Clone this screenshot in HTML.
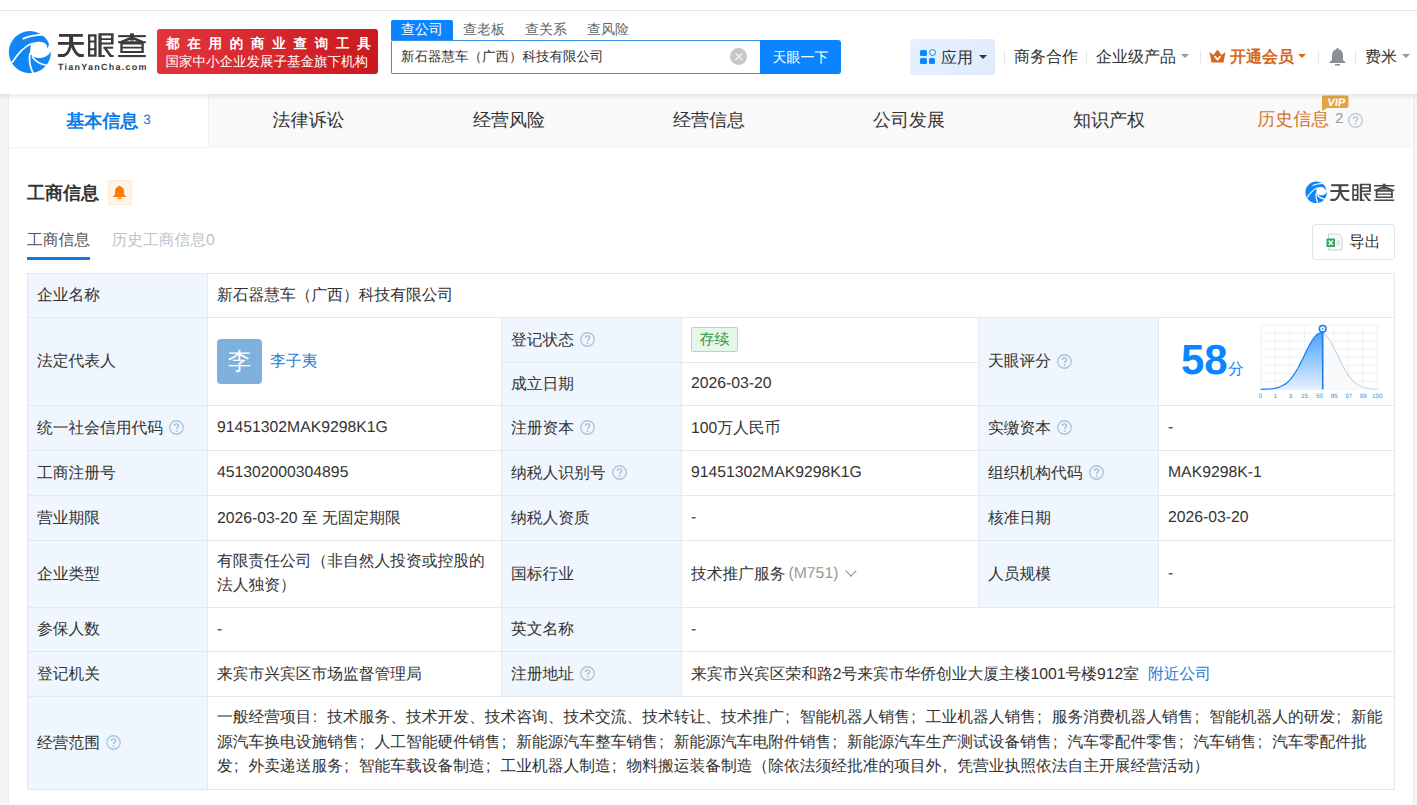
<!DOCTYPE html>
<html><head><meta charset="utf-8">
<style>
*{box-sizing:border-box;margin:0;padding:0}
html,body{width:1417px;height:805px;overflow:hidden}
body{position:relative;background:#f5f5f5;font-family:"Liberation Sans",sans-serif;color:#333;font-size:16px;text-rendering:geometricPrecision}
.a{position:absolute;white-space:nowrap}
#hdr{position:absolute;left:0;top:0;width:1417px;height:94px;background:#fff}
#hdr .topline{position:absolute;left:0;top:10px;width:1417px;height:1px;background:#e6e6e6}
#card{position:absolute;left:9px;top:94px;width:1404px;height:711px;background:#fff;box-shadow:-1px 0 0 #ebebeb,1px 0 0 #ebebeb}
.tabs{position:absolute;left:0;top:0;width:1403px;height:54px;background:#f9f9f9;border-bottom:1px solid #f3f3f3}
#shd{position:absolute;left:0;top:94px;width:1417px;height:6px;background:linear-gradient(rgba(0,0,0,0.075),rgba(0,0,0,0))}
.tab{position:absolute;top:0;height:53px;width:200px;text-align:center;line-height:52px;font-size:18px;color:#333}
.tab.d{border-left:1px solid #efefef}
.tab.on{background:#fff;color:#0a7ce8;font-weight:bold;width:199px}
.qi{margin-left:6px;margin-top:-1px;flex:none}
.q{display:inline-block;width:14px;height:14px;border:1.3px solid #b9cfe4;border-radius:50%;color:#b0c8df;font-size:11px;line-height:12px;text-align:center;vertical-align:middle;font-weight:normal}
/* table */
.tb{position:absolute}
.cell{position:absolute;font-size:16px;color:#333;display:flex;align-items:center;padding-left:10px}
.lbl{background:#eff6fd}
.hl{position:absolute;height:1px;background:#e4ebf3}
.vl{position:absolute;width:1px;background:#e4ebf3}
.c{position:absolute;border:1px solid #e3e9f0;font-size:15.75px;color:#333;display:flex;align-items:center;padding-left:9px;white-space:nowrap;background:#fff}
.c.lbl{background:#eff6fd}
.qi{margin-left:6px;margin-top:-1px;flex:none}
.q{display:inline-block;position:relative;width:14px;height:14px;border:1.2px solid #bcd2e6;border-radius:50%;color:#a9c4dc;font-size:10.5px;line-height:12px;text-align:center;font-style:normal;margin-left:6px}
.av{display:inline-block;width:45px;height:45px;border-radius:4px;background:#7eb1dc;color:#fff;font-size:23.5px;line-height:45px;text-align:center;font-weight:500}
.lk{color:#2a7bd6}
.av+.lk{margin-left:8px}
.tag{display:inline-block;border:1px solid #a6dfb5;background:#e6f7ea;color:#2b9b47;font-size:15px;padding:0 7.5px;height:25px;line-height:23px;border-radius:2px;margin-top:-1px}
.gr{color:#999;margin-left:3px}
.chev{display:inline-block;width:8px;height:8px;border-right:1.2px solid #8a8a8a;border-bottom:1.2px solid #8a8a8a;transform:rotate(45deg);margin-left:9px;margin-top:-6px}
.ml{white-space:normal;line-height:24px}
.logo-t{left:57px;top:27px;font-size:29px;font-weight:bold;color:#3b3738;letter-spacing:1.5px;line-height:38px;transform:scaleY(0.86);transform-origin:0 18px}
.logo-s{left:58px;top:61px;font-size:9px;font-weight:bold;color:#3b3738;letter-spacing:1.25px;line-height:12px}
.banner{left:157px;top:29px;width:221px;height:45px;border-radius:3px;background:linear-gradient(100deg,#e2363c,#c9191f);color:#fff;text-align:center}
.b1{position:absolute;left:9px;top:5px;font-size:13.5px;font-weight:bold;letter-spacing:7.75px;line-height:20px}
.b2{position:absolute;left:8.5px;top:23px;font-size:13.5px;font-weight:500;line-height:19px}
.stab{top:20px;width:62px;height:20px;line-height:18.5px;font-size:14px;color:#666;text-align:center;border-radius:2px 2px 0 0}
.stab.on{background:#0a84ff;color:#fff}
.sbox{left:391px;top:40px;width:370px;height:34px;border:1px solid #3d8fe0;border-right:none;border-radius:2px 0 0 2px;font-size:13.5px;line-height:32px;padding-left:9px;color:#333}
.clr{left:730px;top:48px;width:17px;height:17px;border-radius:50%;background:#c6c6ca}
.clr:before,.clr:after{content:"";position:absolute;left:3.5px;top:7.8px;width:10px;height:1.4px;background:#fff;transform:rotate(45deg)}
.clr:after{transform:rotate(-45deg)}
.sbtn{left:760px;top:40px;width:81px;height:34px;background:#0a84ff;border-radius:0 3px 3px 0;color:#fff;font-size:14px;line-height:34px;text-align:center}
.appbtn{left:910px;top:39px;width:85px;height:36px;border-radius:3px;background:linear-gradient(135deg,#e6f1ff,#dfeafc)}
.grid{position:absolute;left:10px;top:10px;width:16px;height:16px}
.grid i{position:absolute;width:6.6px;height:6.4px;background:#0a84ff;border-radius:1.5px}
.grid i:nth-child(1){left:0.3px;top:0.5px}.grid i:nth-child(2){left:8.6px;top:0.2px;width:7.2px;height:7.2px;background:none;border:1.9px solid #0a84ff;border-radius:50%}
.grid i:nth-child(3){left:0.3px;top:8.5px}.grid i:nth-child(4){left:8.6px;top:8.5px}
.apptx{position:absolute;left:31px;top:9px;font-size:16px;line-height:22px;color:#333}
.caret{display:inline-block;width:0;height:0;border-left:4px solid transparent;border-right:4px solid transparent;border-top:4.5px solid #333}
.appbtn .caret{position:absolute;left:69px;top:16px}
.caret.gy{border-top-color:#999}.caret.or{border-top-color:#d2691e}
.sep{top:50px;width:1px;height:14px;background:#e8e8e8}
.nav{top:47px;font-size:16px;line-height:22px;color:#333}
.nav.vip{color:#d2691e;font-weight:bold}
.pn{display:inline-block;width:15.75px;text-align:left;padding-left:1.3px;font-size:16px}
</style></head><body>
<div id="hdr">
  <div class="topline"></div>
  <svg class="a" style="left:8px;top:30px" width="44" height="44" viewBox="0 0 805 805">
    <circle cx="400" cy="405" r="385" fill="#1286f5"/>
    <path d="M420 252 C480 215 580 205 650 230 C710 255 728 300 712 338 C748 312 756 245 738 195 C718 150 680 115 620 78 L830 60 L830 378 L792 378 C760 462 660 516 560 513 C480 506 425 472 400 432 Z" fill="#fff"/>
    <path d="M268 162 C380 112 500 88 640 84" stroke="#fff" stroke-width="32" fill="none"/>
    <path d="M72 600 C180 432 300 300 432 248" stroke="#fff" stroke-width="32" fill="none"/>
    <path d="M402 425 C378 560 412 700 468 810" stroke="#fff" stroke-width="32" fill="none"/>
    <path d="M440 486 C505 585 600 632 712 648" stroke="#fff" stroke-width="32" fill="none"/>
  </svg>
  <svg class="a" style="left:56px;top:31px" width="94" height="28" viewBox="56 31 94 28"><g fill="#3d393a">
<rect x="59" y="34" width="23.8" height="2.8"/>
<rect x="57.9" y="42" width="25.9" height="2.8"/>
<rect x="69.1" y="35" width="4" height="9"/>
<path d="M71 44 C70 48.5 67.8 54.3 64 55.5 L57.9 55.5 M72 44.5 C73.5 49 76 54.3 79.6 55.5 L83.8 55.5" fill="none" stroke="#3d393a" stroke-width="2.9"/>
<path d="M88 34.2 H96.6 V56.7 H88 Z M90.3 36.4 V40.6 H94.2 V36.4 Z M90.3 42.6 V48.3 H94.2 V42.6 Z M90.3 50.2 V54.5 H94.2 V50.2 Z" fill-rule="evenodd"/>
<path d="M98.4 33.3 H113.6 V44.6 H101.6 V54.9 H104.8 V57.1 H98.4 Z M101.6 35.5 V38.2 H111 V35.5 Z M101.6 40.1 V42.6 H111 V40.1 Z" fill-rule="evenodd"/>
<rect x="103.4" y="46.7" width="9.8" height="2"/>
<path d="M103.6 48.2 L106.6 48.2 L111.6 55 L113.6 55 L113.6 57.1 L109.8 57.1 Z"/>
<rect x="118.1" y="35.1" width="27.7" height="2.1"/>
<rect x="130" y="33.3" width="3.9" height="7.3"/>
<path d="M131.9 37.6 L121 42.3 M131.9 37.6 L142.8 42.3" fill="none" stroke="#3d393a" stroke-width="2.6"/>
<rect x="118.1" y="41.2" width="27.7" height="2"/>
<path d="M120.3 43 H143.8 V53.1 H120.3 Z M122.6 44.4 V46.8 H141.5 V44.4 Z M122.6 48.6 V50.9 H141.5 V48.6 Z" fill-rule="evenodd"/>
<rect x="118.1" y="55" width="27.7" height="2.1"/>
</g></svg>
  <div class="a logo-s">TianYanCha.com</div>
  <div class="a banner"><div class="b1">都在用的商业查询工具</div><div class="b2">国家中小企业发展子基金旗下机构</div></div>
  <div class="a stab on" style="left:391px">查公司</div>
  <div class="a stab" style="left:453px">查老板</div>
  <div class="a stab" style="left:515px">查关系</div>
  <div class="a stab" style="left:577px">查风险</div>
  <div class="a sbox">新石器慧车（广西）科技有限公司</div>
  <div class="a clr"></div>
  <div class="a sbtn">天眼一下</div>
  <div class="a appbtn"><span class="grid"><i></i><i class="o"></i><i></i><i></i></span><span class="apptx">应用</span><span class="caret dk"></span></div>
  <div class="a sep" style="left:1004px"></div>
  <div class="a nav" style="left:1014px">商务合作</div>
  <div class="a sep" style="left:1086px"></div>
  <div class="a nav" style="left:1096px">企业级产品</div><span class="a caret gy" style="left:1181px;top:54px"></span>
  <div class="a sep" style="left:1200px"></div>
  <svg class="a" style="left:1209px;top:49px" width="17" height="14" viewBox="0 0 17 14"><path d="M0.5 3 L4.5 6 L8.5 0.5 L12.5 6 L16.5 3 L14.5 13.5 L2.5 13.5 Z" fill="#d2691e"/><path d="M5.5 7 L8.5 10.5 L11.5 7" stroke="#fff" stroke-width="1.8" fill="none"/></svg>
  <div class="a nav vip" style="left:1230px">开通会员</div><span class="a caret or" style="left:1298px;top:54px"></span>
  <div class="a sep" style="left:1318px"></div>
  <svg class="a" style="left:1329px;top:47px" width="17" height="19" viewBox="0 0 17 19"><path d="M8.5 1 C9.3 1 9.6 1.6 9.6 2.2 C12.6 2.8 14 5.2 14 8.5 L14 13 L16.5 15.3 L16.5 16 L0.5 16 L0.5 15.3 L3 13 L3 8.5 C3 5.2 4.4 2.8 7.4 2.2 C7.4 1.6 7.7 1 8.5 1 Z" fill="#8c8f94"/><rect x="6" y="17" width="5" height="1.6" fill="#8c8f94"/></svg>
  <div class="a sep" style="left:1355px"></div>
  <div class="a nav" style="left:1365px">费米</div><span class="a caret gy" style="left:1402px;top:54px"></span>
</div>
<div id="card">
  <div class="tabs">
    <div class="tab on" style="left:0;line-height:52px">基本信息<span style="font-size:13.5px;font-weight:normal;margin-left:5px;vertical-align:3px">3</span></div>
    <div class="tab d" style="left:199px">法律诉讼</div>
    <div class="tab" style="left:400px">经营风险</div>
    <div class="tab" style="left:600px">经营信息</div>
    <div class="tab" style="left:800px">公司发展</div>
    <div class="tab" style="left:1000px">知识产权</div>
    <div class="tab" style="left:1200px;color:#cf7630;line-height:51px;text-indent:2px">历史信息<span style="font-size:14.5px;color:#999;margin-left:6px;vertical-align:2px">2</span><svg width="15" height="15" viewBox="0 0 15 15" style="margin-left:4.5px;vertical-align:-2.5px"><circle cx="7.5" cy="7.5" r="6.8" fill="none" stroke="#b9c4cf" stroke-width="1.2"/><path d="M5.4 5.9 C5.4 4.6 6.3 3.9 7.5 3.9 C8.7 3.9 9.6 4.6 9.6 5.8 C9.6 7.1 7.6 7.3 7.6 8.9" stroke="#b5c0cb" stroke-width="1.3" fill="none"/><circle cx="7.6" cy="10.9" r="0.85" fill="#b5c0cb"/></svg></div>
<svg class="a" style="left:1312px;top:1px" width="28" height="16" viewBox="0 0 28 16"><path d="M2 0.5 H25.5 Q27.5 0.5 27.5 2.5 V11 Q27.5 13 25.5 13 H6 L1 16 V2.5 Q0.5 0.5 2 0.5 Z" fill="#e3a447"/><text x="15" y="11" font-family="Liberation Sans" font-size="11" font-weight="bold" fill="#fff" text-anchor="middle" transform="skewX(-8) translate(1.5 0)">VIP</text></svg>
  </div>
</div>
<div class="a" style="left:27px;top:180px;font-size:18px;font-weight:bold;color:#333;line-height:26px">工商信息</div>
<div class="a" style="left:108px;top:180px;width:24px;height:25px;background:#fff4e8;border:1px solid #fde8d2;border-radius:2px"></div>
<svg class="a" style="left:113px;top:185px" width="13" height="14" viewBox="0 0 13 14"><path d="M6.5 0.5 C7.2 0.5 7.5 1 7.5 1.5 C9.8 2 11 3.8 11 6.5 L11 9.5 L12.8 11.2 L12.8 12 L0.2 12 L0.2 11.2 L2 9.5 L2 6.5 C2 3.8 3.2 2 5.5 1.5 C5.5 1 5.8 0.5 6.5 0.5 Z" fill="#ff7b00"/><rect x="4.6" y="12.6" width="3.8" height="1.4" fill="#ff7b00"/></svg>
<svg class="a" style="left:1304.5px;top:181px" width="22.5" height="22.5" viewBox="0 0 805 805">
    <circle cx="400" cy="405" r="385" fill="#1286f5"/>
    <path d="M420 252 C480 215 580 205 650 230 C710 255 728 300 712 338 C748 312 756 245 738 195 C718 150 680 115 620 78 L830 60 L830 378 L792 378 C760 462 660 516 560 513 C480 506 425 472 400 432 Z" fill="#fff"/>
    <path d="M268 162 C380 112 500 88 640 84" stroke="#fff" stroke-width="40" fill="none"/>
    <path d="M72 600 C180 432 300 300 432 248" stroke="#fff" stroke-width="40" fill="none"/>
    <path d="M402 425 C378 560 412 700 468 810" stroke="#fff" stroke-width="40" fill="none"/>
    <path d="M440 486 C505 585 600 632 712 648" stroke="#fff" stroke-width="40" fill="none"/>
  </svg>
<svg class="a" style="left:1328.9px;top:182.3px" width="68.3" height="20.4" viewBox="56 31 94 28"><g fill="#48484a">
<rect x="59" y="34" width="23.8" height="2.8"/>
<rect x="57.9" y="42" width="25.9" height="2.8"/>
<rect x="69.1" y="35" width="4" height="9"/>
<path d="M71 44 C70 48.5 67.8 54.3 64 55.5 L57.9 55.5 M72 44.5 C73.5 49 76 54.3 79.6 55.5 L83.8 55.5" fill="none" stroke="#48484a" stroke-width="2.9"/>
<path d="M88 34.2 H96.6 V56.7 H88 Z M90.3 36.4 V40.6 H94.2 V36.4 Z M90.3 42.6 V48.3 H94.2 V42.6 Z M90.3 50.2 V54.5 H94.2 V50.2 Z" fill-rule="evenodd"/>
<path d="M98.4 33.3 H113.6 V44.6 H101.6 V54.9 H104.8 V57.1 H98.4 Z M101.6 35.5 V38.2 H111 V35.5 Z M101.6 40.1 V42.6 H111 V40.1 Z" fill-rule="evenodd"/>
<rect x="103.4" y="46.7" width="9.8" height="2"/>
<path d="M103.6 48.2 L106.6 48.2 L111.6 55 L113.6 55 L113.6 57.1 L109.8 57.1 Z"/>
<rect x="118.1" y="35.1" width="27.7" height="2.1"/>
<rect x="130" y="33.3" width="3.9" height="7.3"/>
<path d="M131.9 37.6 L121 42.3 M131.9 37.6 L142.8 42.3" fill="none" stroke="#48484a" stroke-width="2.6"/>
<rect x="118.1" y="41.2" width="27.7" height="2"/>
<path d="M120.3 43 H143.8 V53.1 H120.3 Z M122.6 44.4 V46.8 H141.5 V44.4 Z M122.6 48.6 V50.9 H141.5 V48.6 Z" fill-rule="evenodd"/>
<rect x="118.1" y="55" width="27.7" height="2.1"/>
</g></svg>
<div class="a" style="left:27px;top:230px;font-size:15.75px;color:#555;line-height:22px">工商信息</div>
<div class="a" style="left:27px;top:257px;width:63px;height:3px;background:#0a7ce8"></div>
<div class="a" style="left:111.5px;top:230px;font-size:15.75px;color:#c0c4cc;line-height:22px">历史工商信息0</div>
<div class="a" style="left:1312px;top:224px;width:83px;height:36px;border:1px solid #dfe3ea;border-radius:3px"></div>
<svg class="a" style="left:1326px;top:233px" width="17" height="18" viewBox="0 0 17 18"><path d="M2.5 1 L12.5 1 L16 4.5 L16 17 L2.5 17 Z" fill="#fafafa" stroke="#cfd2d6" stroke-width="1"/><rect x="0.5" y="5.5" width="8.5" height="8.5" fill="#2fa866"/><path d="M2.7 7.6 L6.8 11.9 M6.8 7.6 L2.7 11.9" stroke="#fff" stroke-width="1.4"/><path d="M10.5 8 H14 M10.5 10 H14 M10.5 12 H14" stroke="#cfd2d6" stroke-width="1"/></svg>
<div class="a" style="left:1349px;top:232px;font-size:15.75px;color:#333;line-height:22px">导出</div>
<div id="shd"></div>
<div id="tbl">
<div class="c lbl" style="left:27px;top:273px;width:181px;height:45px;">企业名称</div>
<div class="c" style="left:207px;top:273px;width:1188px;height:45px;">新石器慧车（广西）科技有限公司</div>
<div class="c lbl" style="left:27px;top:317px;width:181px;height:89px;">法定代表人</div>
<div class="c" style="left:207px;top:317px;width:295px;height:89px;"><span class="av">李</span><span class="lk">李子夷</span></div>
<div class="c lbl" style="left:501px;top:317px;width:181px;height:46px;">登记状态<svg class="qi" width="15" height="15" viewBox="0 0 15 15"><circle cx="7.5" cy="7.5" r="6.75" fill="none" stroke="#abc3da" stroke-width="1.3"/><path d="M5.4 5.9 C5.4 4.6 6.3 3.9 7.5 3.9 C8.7 3.9 9.6 4.6 9.6 5.8 C9.6 7.1 7.6 7.3 7.6 8.9" stroke="#a6bdd4" stroke-width="1.35" fill="none"/><circle cx="7.6" cy="10.9" r="0.9" fill="#a6bdd4"/></svg></div>
<div class="c" style="left:681px;top:317px;width:298px;height:46px;"><span class="tag">存续</span></div>
<div class="c lbl" style="left:501px;top:362px;width:181px;height:44px;">成立日期</div>
<div class="c" style="left:681px;top:362px;width:298px;height:44px;">2026-03-20</div>
<div class="c lbl" style="left:978px;top:317px;width:181px;height:89px;">天眼评分<svg class="qi" width="15" height="15" viewBox="0 0 15 15"><circle cx="7.5" cy="7.5" r="6.75" fill="none" stroke="#abc3da" stroke-width="1.3"/><path d="M5.4 5.9 C5.4 4.6 6.3 3.9 7.5 3.9 C8.7 3.9 9.6 4.6 9.6 5.8 C9.6 7.1 7.6 7.3 7.6 8.9" stroke="#a6bdd4" stroke-width="1.35" fill="none"/><circle cx="7.6" cy="10.9" r="0.9" fill="#a6bdd4"/></svg></div>
<div class="c" style="left:1158px;top:317px;width:237px;height:89px;"></div>
<span class="a" style="left:1181px;top:336px;font-size:42px;font-weight:bold;color:#0a84ff;line-height:48px">58</span><span class="a" style="left:1228px;top:359px;font-size:15.75px;color:#0a84ff;line-height:22px">分</span>
<svg class="a" style="left:1250px;top:315px" width="140" height="90" viewBox="1250 315 140 90">
<defs><linearGradient id="gf" x1="0" y1="0" x2="0" y2="1"><stop offset="0" stop-color="#4aa2ff"/><stop offset="1" stop-color="#e6f1ff"/></linearGradient></defs>
<g stroke="#edf1f7" stroke-width="1"><line x1="1260.60" y1="325" x2="1260.60" y2="389.4"/><line x1="1275.21" y1="325" x2="1275.21" y2="389.4"/><line x1="1289.82" y1="325" x2="1289.82" y2="389.4"/><line x1="1304.44" y1="325" x2="1304.44" y2="389.4"/><line x1="1319.05" y1="325" x2="1319.05" y2="389.4"/><line x1="1333.66" y1="325" x2="1333.66" y2="389.4"/><line x1="1348.28" y1="325" x2="1348.28" y2="389.4"/><line x1="1362.89" y1="325" x2="1362.89" y2="389.4"/><line x1="1377.50" y1="325" x2="1377.50" y2="389.4"/><line x1="1260.6" y1="325.00" x2="1377.5" y2="325.00"/><line x1="1260.6" y1="333.05" x2="1377.5" y2="333.05"/><line x1="1260.6" y1="341.10" x2="1377.5" y2="341.10"/><line x1="1260.6" y1="349.15" x2="1377.5" y2="349.15"/><line x1="1260.6" y1="357.20" x2="1377.5" y2="357.20"/><line x1="1260.6" y1="365.25" x2="1377.5" y2="365.25"/><line x1="1260.6" y1="373.30" x2="1377.5" y2="373.30"/><line x1="1260.6" y1="381.35" x2="1377.5" y2="381.35"/><line x1="1260.6" y1="389.40" x2="1377.5" y2="389.40"/></g>
<polygon points="1322.70,333.20 1324.07,333.87 1325.44,334.91 1326.81,336.30 1328.18,338.00 1329.55,340.00 1330.92,342.24 1332.29,344.69 1333.66,347.31 1335.03,350.04 1336.40,352.85 1337.77,355.69 1339.14,358.53 1340.51,361.32 1341.88,364.03 1343.25,366.64 1344.62,369.12 1345.99,371.45 1347.36,373.63 1348.73,375.64 1350.10,377.47 1351.47,379.13 1352.84,380.62 1354.21,381.95 1355.58,383.12 1356.95,384.14 1358.32,385.02 1359.69,385.79 1361.06,386.43 1362.43,386.98 1363.80,387.45 1365.17,387.83 1366.54,388.15 1367.91,388.41 1369.28,388.62 1370.65,388.79 1372.02,388.93 1373.39,389.03 1374.76,389.12 1376.13,389.19 1377.50,389.24 1377.5,389.4 1322.7,389.4" fill="#f8fafc"/>
<polyline points="1322.70,333.20 1324.07,333.87 1325.44,334.91 1326.81,336.30 1328.18,338.00 1329.55,340.00 1330.92,342.24 1332.29,344.69 1333.66,347.31 1335.03,350.04 1336.40,352.85 1337.77,355.69 1339.14,358.53 1340.51,361.32 1341.88,364.03 1343.25,366.64 1344.62,369.12 1345.99,371.45 1347.36,373.63 1348.73,375.64 1350.10,377.47 1351.47,379.13 1352.84,380.62 1354.21,381.95 1355.58,383.12 1356.95,384.14 1358.32,385.02 1359.69,385.79 1361.06,386.43 1362.43,386.98 1363.80,387.45 1365.17,387.83 1366.54,388.15 1367.91,388.41 1369.28,388.62 1370.65,388.79 1372.02,388.93 1373.39,389.03 1374.76,389.12 1376.13,389.19 1377.50,389.24" fill="none" stroke="#c9d5e1" stroke-width="1.1"/>
<polygon points="1260.6,389.4 1260.60,389.33 1262.15,389.30 1263.70,389.26 1265.26,389.21 1266.81,389.14 1268.36,389.05 1269.91,388.93 1271.47,388.78 1273.02,388.58 1274.57,388.32 1276.12,388.00 1277.68,387.60 1279.23,387.11 1280.78,386.50 1282.34,385.77 1283.89,384.90 1285.44,383.86 1286.99,382.65 1288.55,381.24 1290.10,379.62 1291.65,377.79 1293.20,375.73 1294.75,373.45 1296.31,370.96 1297.86,368.27 1299.41,365.39 1300.96,362.37 1302.52,359.23 1304.07,356.02 1305.62,352.80 1307.17,349.63 1308.73,346.55 1310.28,343.65 1311.83,340.98 1313.38,338.61 1314.94,336.59 1316.49,334.97 1318.04,333.80 1319.60,333.10 1321.15,332.90 1322.70,333.20 1322.7,389.4" fill="url(#gf)"/>
<polyline points="1260.60,389.33 1262.15,389.30 1263.70,389.26 1265.26,389.21 1266.81,389.14 1268.36,389.05 1269.91,388.93 1271.47,388.78 1273.02,388.58 1274.57,388.32 1276.12,388.00 1277.68,387.60 1279.23,387.11 1280.78,386.50 1282.34,385.77 1283.89,384.90 1285.44,383.86 1286.99,382.65 1288.55,381.24 1290.10,379.62 1291.65,377.79 1293.20,375.73 1294.75,373.45 1296.31,370.96 1297.86,368.27 1299.41,365.39 1300.96,362.37 1302.52,359.23 1304.07,356.02 1305.62,352.80 1307.17,349.63 1308.73,346.55 1310.28,343.65 1311.83,340.98 1313.38,338.61 1314.94,336.59 1316.49,334.97 1318.04,333.80 1319.60,333.10 1321.15,332.90 1322.70,333.20" fill="none" stroke="#1a84f0" stroke-width="1.3"/>
<line x1="1322.7" y1="331" x2="1322.7" y2="389.4" stroke="#1a7ee6" stroke-width="1.6"/>
<circle cx="1322.7" cy="328.8" r="3.3" fill="#fff" stroke="#1a7ee6" stroke-width="1.6"/>
<circle cx="1322.7" cy="328.8" r="0.9" fill="#1a7ee6"/>
<g font-family="Liberation Sans" font-size="6.3" fill="#3b8fe8" text-anchor="middle"><text x="1260.6" y="398">0</text><text x="1275.3" y="398">1</text><text x="1290.4" y="398">3</text><text x="1304.4" y="398">15</text><text x="1319.6" y="398">50</text><text x="1334.2" y="398">85</text><text x="1348.8" y="398">97</text><text x="1363.2" y="398">99</text><text x="1377.2" y="398">100</text></g>
</svg>
<div class="c lbl" style="left:27px;top:405px;width:181px;height:46px;">统一社会信用代码<svg class="qi" width="15" height="15" viewBox="0 0 15 15"><circle cx="7.5" cy="7.5" r="6.75" fill="none" stroke="#abc3da" stroke-width="1.3"/><path d="M5.4 5.9 C5.4 4.6 6.3 3.9 7.5 3.9 C8.7 3.9 9.6 4.6 9.6 5.8 C9.6 7.1 7.6 7.3 7.6 8.9" stroke="#a6bdd4" stroke-width="1.35" fill="none"/><circle cx="7.6" cy="10.9" r="0.9" fill="#a6bdd4"/></svg></div>
<div class="c" style="left:207px;top:405px;width:295px;height:46px;">91451302MAK9298K1G</div>
<div class="c lbl" style="left:501px;top:405px;width:181px;height:46px;">注册资本<svg class="qi" width="15" height="15" viewBox="0 0 15 15"><circle cx="7.5" cy="7.5" r="6.75" fill="none" stroke="#abc3da" stroke-width="1.3"/><path d="M5.4 5.9 C5.4 4.6 6.3 3.9 7.5 3.9 C8.7 3.9 9.6 4.6 9.6 5.8 C9.6 7.1 7.6 7.3 7.6 8.9" stroke="#a6bdd4" stroke-width="1.35" fill="none"/><circle cx="7.6" cy="10.9" r="0.9" fill="#a6bdd4"/></svg></div>
<div class="c" style="left:681px;top:405px;width:298px;height:46px;">100万人民币</div>
<div class="c lbl" style="left:978px;top:405px;width:181px;height:46px;">实缴资本<svg class="qi" width="15" height="15" viewBox="0 0 15 15"><circle cx="7.5" cy="7.5" r="6.75" fill="none" stroke="#abc3da" stroke-width="1.3"/><path d="M5.4 5.9 C5.4 4.6 6.3 3.9 7.5 3.9 C8.7 3.9 9.6 4.6 9.6 5.8 C9.6 7.1 7.6 7.3 7.6 8.9" stroke="#a6bdd4" stroke-width="1.35" fill="none"/><circle cx="7.6" cy="10.9" r="0.9" fill="#a6bdd4"/></svg></div>
<div class="c" style="left:1158px;top:405px;width:237px;height:46px;">-</div>
<div class="c lbl" style="left:27px;top:450px;width:181px;height:46px;">工商注册号</div>
<div class="c" style="left:207px;top:450px;width:295px;height:46px;">451302000304895</div>
<div class="c lbl" style="left:501px;top:450px;width:181px;height:46px;">纳税人识别号<svg class="qi" width="15" height="15" viewBox="0 0 15 15"><circle cx="7.5" cy="7.5" r="6.75" fill="none" stroke="#abc3da" stroke-width="1.3"/><path d="M5.4 5.9 C5.4 4.6 6.3 3.9 7.5 3.9 C8.7 3.9 9.6 4.6 9.6 5.8 C9.6 7.1 7.6 7.3 7.6 8.9" stroke="#a6bdd4" stroke-width="1.35" fill="none"/><circle cx="7.6" cy="10.9" r="0.9" fill="#a6bdd4"/></svg></div>
<div class="c" style="left:681px;top:450px;width:298px;height:46px;">91451302MAK9298K1G</div>
<div class="c lbl" style="left:978px;top:450px;width:181px;height:46px;">组织机构代码<svg class="qi" width="15" height="15" viewBox="0 0 15 15"><circle cx="7.5" cy="7.5" r="6.75" fill="none" stroke="#abc3da" stroke-width="1.3"/><path d="M5.4 5.9 C5.4 4.6 6.3 3.9 7.5 3.9 C8.7 3.9 9.6 4.6 9.6 5.8 C9.6 7.1 7.6 7.3 7.6 8.9" stroke="#a6bdd4" stroke-width="1.35" fill="none"/><circle cx="7.6" cy="10.9" r="0.9" fill="#a6bdd4"/></svg></div>
<div class="c" style="left:1158px;top:450px;width:237px;height:46px;">MAK9298K-1</div>
<div class="c lbl" style="left:27px;top:495px;width:181px;height:46px;">营业期限</div>
<div class="c" style="left:207px;top:495px;width:295px;height:46px;">2026-03-20 至 无固定期限</div>
<div class="c lbl" style="left:501px;top:495px;width:181px;height:46px;">纳税人资质</div>
<div class="c" style="left:681px;top:495px;width:298px;height:46px;">-</div>
<div class="c lbl" style="left:978px;top:495px;width:181px;height:46px;">核准日期</div>
<div class="c" style="left:1158px;top:495px;width:237px;height:46px;">2026-03-20</div>
<div class="c lbl" style="left:27px;top:540px;width:181px;height:68px;">企业类型</div>
<div class="c" style="left:207px;top:540px;width:295px;height:68px;"><div class="ml">有限责任公司（非自然人投资或控股的<br>法人独资）</div></div>
<div class="c lbl" style="left:501px;top:540px;width:181px;height:68px;">国标行业</div>
<div class="c" style="left:681px;top:540px;width:298px;height:68px;">技术推广服务<span class="gr">(M751)</span><span class="chev"></span></div>
<div class="c lbl" style="left:978px;top:540px;width:181px;height:68px;">人员规模</div>
<div class="c" style="left:1158px;top:540px;width:237px;height:68px;">-</div>
<div class="c lbl" style="left:27px;top:607px;width:181px;height:45px;">参保人数</div>
<div class="c" style="left:207px;top:607px;width:295px;height:45px;">-</div>
<div class="c lbl" style="left:501px;top:607px;width:181px;height:45px;">英文名称</div>
<div class="c" style="left:681px;top:607px;width:714px;height:45px;">-</div>
<div class="c lbl" style="left:27px;top:651px;width:181px;height:46px;">登记机关</div>
<div class="c" style="left:207px;top:651px;width:295px;height:46px;">来宾市兴宾区市场监督管理局</div>
<div class="c lbl" style="left:501px;top:651px;width:181px;height:46px;">注册地址<svg class="qi" width="15" height="15" viewBox="0 0 15 15"><circle cx="7.5" cy="7.5" r="6.75" fill="none" stroke="#abc3da" stroke-width="1.3"/><path d="M5.4 5.9 C5.4 4.6 6.3 3.9 7.5 3.9 C8.7 3.9 9.6 4.6 9.6 5.8 C9.6 7.1 7.6 7.3 7.6 8.9" stroke="#a6bdd4" stroke-width="1.35" fill="none"/><circle cx="7.6" cy="10.9" r="0.9" fill="#a6bdd4"/></svg></div>
<div class="c" style="left:681px;top:651px;width:714px;height:46px;">来宾市兴宾区荣和路2号来宾市华侨创业大厦主楼1001号楼912室<span class="lk" style="margin-left:9px">附近公司</span></div>
<div class="c lbl" style="left:27px;top:696px;width:181px;height:94px;">经营范围<svg class="qi" width="15" height="15" viewBox="0 0 15 15"><circle cx="7.5" cy="7.5" r="6.75" fill="none" stroke="#abc3da" stroke-width="1.3"/><path d="M5.4 5.9 C5.4 4.6 6.3 3.9 7.5 3.9 C8.7 3.9 9.6 4.6 9.6 5.8 C9.6 7.1 7.6 7.3 7.6 8.9" stroke="#a6bdd4" stroke-width="1.35" fill="none"/><circle cx="7.6" cy="10.9" r="0.9" fill="#a6bdd4"/></svg></div>
<div class="c" style="left:207px;top:696px;width:1188px;height:94px;"><div class="ml" style="line-height:24.5px;white-space:nowrap">一般经营项目<span class="pn">:</span>技术服务、技术开发、技术咨询、技术交流、技术转让、技术推广<span class="pn">;</span>智能机器人销售<span class="pn">;</span>工业机器人销售<span class="pn">;</span>服务消费机器人销售<span class="pn">;</span>智能机器人的研发<span class="pn">;</span>新能<br>源汽车换电设施销售<span class="pn">;</span>人工智能硬件销售<span class="pn">;</span>新能源汽车整车销售<span class="pn">;</span>新能源汽车电附件销售<span class="pn">;</span>新能源汽车生产测试设备销售<span class="pn">;</span>汽车零配件零售<span class="pn">;</span>汽车销售<span class="pn">;</span>汽车零配件批<br>发<span class="pn">;</span>外卖递送服务<span class="pn">;</span>智能车载设备制造<span class="pn">;</span>工业机器人制造<span class="pn">;</span>物料搬运装备制造（除依法须经批准的项目外<span class="pn">,</span>凭营业执照依法自主开展经营活动）</div></div>
</div>
</body></html>
